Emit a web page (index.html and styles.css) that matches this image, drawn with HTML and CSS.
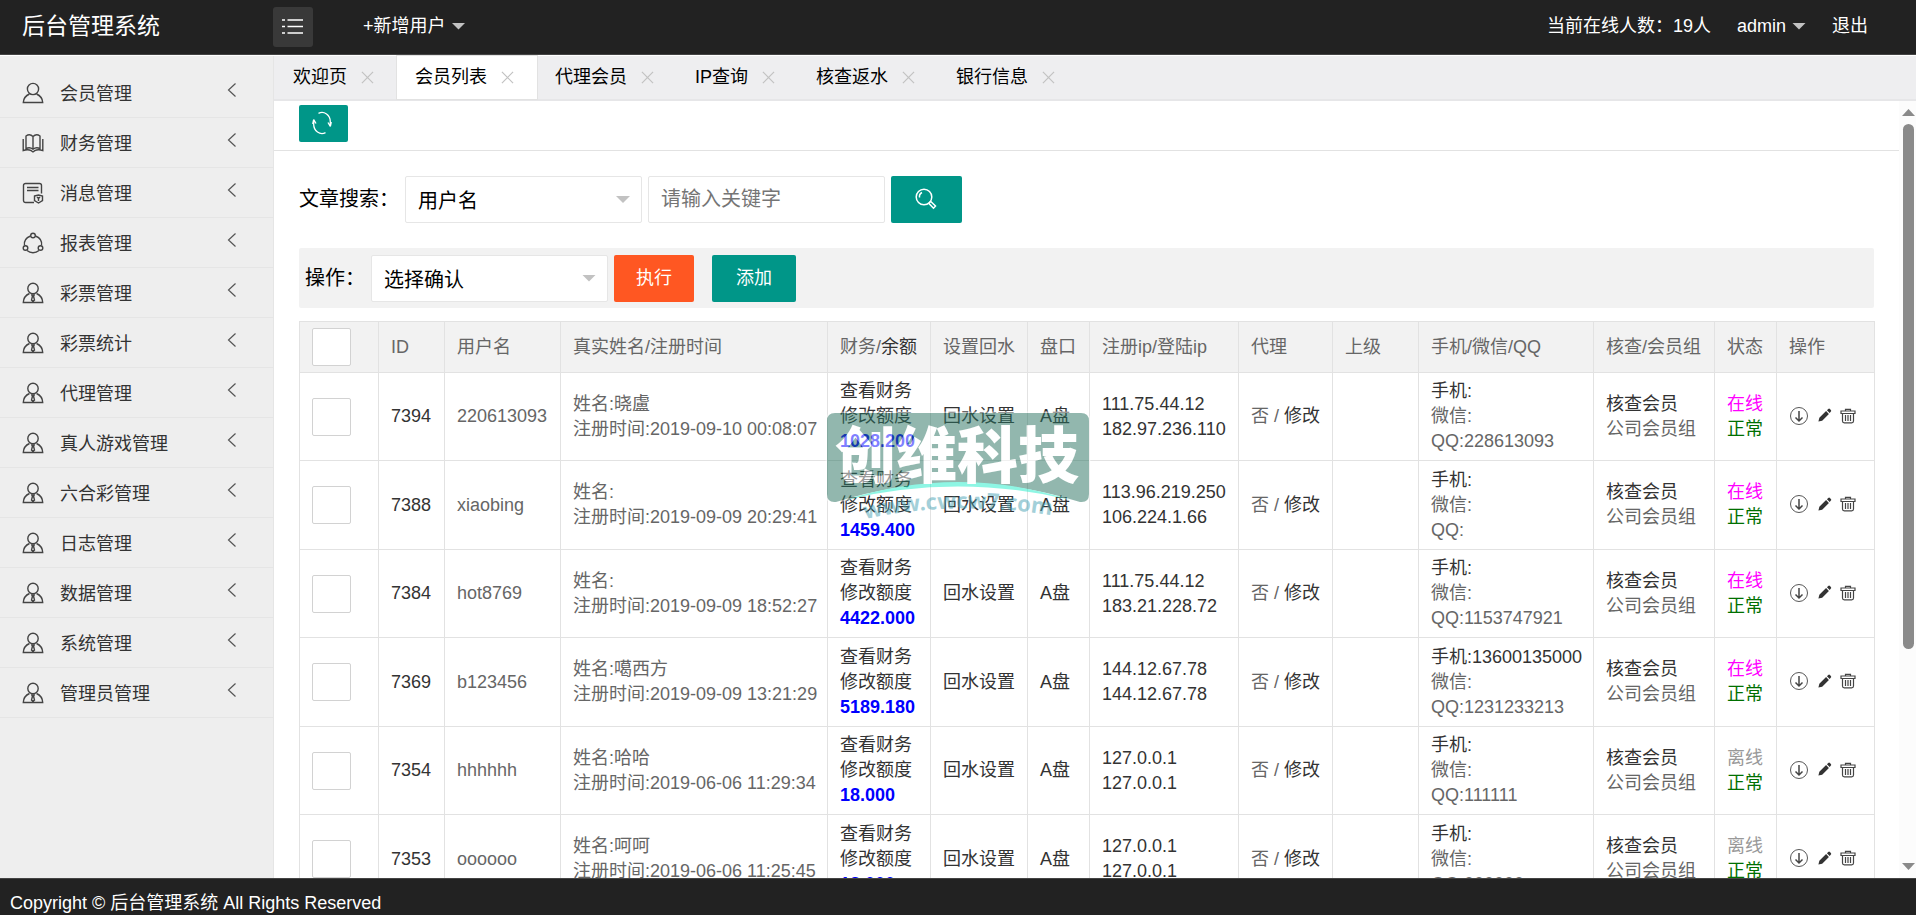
FILE: index.html
```html
<!DOCTYPE html>
<html lang="zh-CN">
<head>
<meta charset="utf-8">
<title>后台管理系统</title>
<link rel="stylesheet" href="styles.css">
</head>
<body>
<svg class="sprite" aria-hidden="true">
  <symbol id="i-user" viewBox="0 0 22 22"><circle cx="11" cy="7" r="5.6"/><path d="M7.5 12C4 13.500 1.500 16 1.300 20.500h19.400C20.500 16 18 13.500 14.500 12"/></symbol>
  <symbol id="i-tie" viewBox="0 0 22 22"><circle cx="11" cy="6.500" r="5.200"/><path d="M7.500 11.500C4 13 1.500 16 1.300 20.500h19.400C20.500 16 18 13 14.500 11.500M9.800 13h2.400l-.6 1.500.9 3.500-1.500 1.500L9.500 18l.9-3.500z"/></symbol>
  <symbol id="i-book" viewBox="0 0 22 22"><path d="M11 4.500C9 2.500 6 2.500 4 4v12.500c2-1 5-1 7 .7 2-1.700 5-1.700 7-.7V4c-2-1.500-5-1.500-7 .5zM11 4.500v12.700M1.200 7v11.500c3-1 6-1 8 .2l1.800 1.300 1.800-1.300c2-1.200 5-1.200 8-.2V7"/></symbol>
  <symbol id="i-doc" viewBox="0 0 22 22"><path d="M12 20.500H3.500a2 2 0 0 1-2-2v-15a2 2 0 0 1 2-2h14a2 2 0 0 1 2 2v8M5 5.500h11.500M5 8.500h11.500M12.500 14l4-1 4 1v4.500l-4 2.500-4-2.500zM15 15l1.500 1.500L18 15M16.500 16v3"/></symbol>
  <symbol id="i-ring" viewBox="0 0 22 22"><circle cx="11" cy="3.500" r="2.300"/><circle cx="3.500" cy="16" r="2.300"/><circle cx="18.500" cy="16" r="2.300"/><path d="M8.500 4C3.500 6 1.800 9.500 2.500 13.500M13.500 4c5 2 6.700 5.500 6 9.500M5 18.500c3.500 3 8.500 3 12 0"/></symbol>
  <symbol id="i-left" viewBox="0 0 10 16"><path d="M8.500 1.500 1.500 8l7 6.500"/></symbol>
  <symbol id="i-x" viewBox="0 0 14 14"><path d="M1 1l12 12M13 1 1 13"/></symbol>
  <symbol id="i-down" viewBox="0 0 20 20"><circle cx="10" cy="10" r="8.500" stroke-width=".9"/><path d="M10 5v10M6.500 11.500 10 15l3.500-3.500" stroke-width="1.500"/></symbol>
  <symbol id="i-pen" viewBox="0 0 16 16"><path d="M1.500 14.500l1-4 7.200-7.200 3 3L5.500 13.500zM10.600 2.400 12 1q1-.8 2 .2l.8.800q.8 1 0 1.800L13.500 5.300z" fill="#333" stroke="none"/></symbol>
  <symbol id="i-bin" viewBox="0 0 16 16"><path d="M1 3h14v2.500H1zM5.500 3V1.300h5V3M2.500 5.500V13q0 1.800 1.800 1.800h7.400q1.800 0 1.800-1.800V5.500M5.500 7v6M8 7v6M10.500 7v6"/></symbol>
</svg>

<header class="header">
  <h1 class="logo">后台管理系统</h1>
  <button class="menu-toggle" type="button" aria-label="收起菜单">
    <svg width="22" height="18" viewBox="0 0 22 18"><path d="M0 2h3M5.500 2H21M0 8.500h3M5.500 8.500H21M0 15h3M5.500 15H21" stroke="#fff" stroke-width="1.500"/></svg>
  </button>
  <a class="top-link" href="#">+新增用户<i class="caret"></i></a>
  <nav class="top-right">
    <a class="top-link" href="#">当前在线人数：19人</a>
    <a class="top-link" href="#">admin<i class="caret"></i></a>
    <a class="top-link" href="#">退出</a>
  </nav>
</header>

<div class="body">
  <nav class="sidebar">
    <a class="side-item" href="#"><svg class="ico"><use href="#i-user"/></svg>会员管理<svg class="chev"><use href="#i-left"/></svg></a>
    <a class="side-item" href="#"><svg class="ico"><use href="#i-book"/></svg>财务管理<svg class="chev"><use href="#i-left"/></svg></a>
    <a class="side-item" href="#"><svg class="ico"><use href="#i-doc"/></svg>消息管理<svg class="chev"><use href="#i-left"/></svg></a>
    <a class="side-item" href="#"><svg class="ico"><use href="#i-ring"/></svg>报表管理<svg class="chev"><use href="#i-left"/></svg></a>
    <a class="side-item" href="#"><svg class="ico"><use href="#i-tie"/></svg>彩票管理<svg class="chev"><use href="#i-left"/></svg></a>
    <a class="side-item" href="#"><svg class="ico"><use href="#i-tie"/></svg>彩票统计<svg class="chev"><use href="#i-left"/></svg></a>
    <a class="side-item" href="#"><svg class="ico"><use href="#i-tie"/></svg>代理管理<svg class="chev"><use href="#i-left"/></svg></a>
    <a class="side-item" href="#"><svg class="ico"><use href="#i-tie"/></svg>真人游戏管理<svg class="chev"><use href="#i-left"/></svg></a>
    <a class="side-item" href="#"><svg class="ico"><use href="#i-tie"/></svg>六合彩管理<svg class="chev"><use href="#i-left"/></svg></a>
    <a class="side-item" href="#"><svg class="ico"><use href="#i-tie"/></svg>日志管理<svg class="chev"><use href="#i-left"/></svg></a>
    <a class="side-item" href="#"><svg class="ico"><use href="#i-tie"/></svg>数据管理<svg class="chev"><use href="#i-left"/></svg></a>
    <a class="side-item" href="#"><svg class="ico"><use href="#i-tie"/></svg>系统管理<svg class="chev"><use href="#i-left"/></svg></a>
    <a class="side-item" href="#"><svg class="ico"><use href="#i-tie"/></svg>管理员管理<svg class="chev"><use href="#i-left"/></svg></a>
  </nav>

  <main class="main">
    <div class="tabs">
      <a class="tab" href="#">欢迎页<svg class="close"><use href="#i-x"/></svg></a>
      <a class="tab active" href="#">会员列表<svg class="close"><use href="#i-x"/></svg></a>
      <a class="tab" href="#">代理会员<svg class="close"><use href="#i-x"/></svg></a>
      <a class="tab" href="#">IP查询<svg class="close"><use href="#i-x"/></svg></a>
      <a class="tab" href="#">核查返水<svg class="close"><use href="#i-x"/></svg></a>
      <a class="tab" href="#">银行信息<svg class="close"><use href="#i-x"/></svg></a>
    </div>

    <div class="frame">
      <div class="page">
        <div class="toolbar">
          <button class="btn refresh" type="button" aria-label="刷新">
            <svg width="20" height="24" viewBox="0 0 20 24" fill="none" stroke="#fff" stroke-width="1.300"><path d="M6.500 2.300C12-.5 18.500 4 18.300 11v4M18.300 15.500l-2.300-4M18.300 15.500l1-4.500M13.500 21.700C8 24.500 1.500 20 1.700 13V9M1.700 8.500l2.300 4M1.700 8.500l-1 4.500"/></svg>
          </button>
        </div>
        <div class="content">
          <form class="search">
            <label class="lbl" for="field">文章搜索：</label>
            <span class="sel"><select id="field"><option>用户名</option></select><i class="caret"></i></span>
            <input class="keyword" type="text" placeholder="请输入关键字" aria-label="关键字">
            <button class="btn find" type="button" aria-label="搜索">
              <svg width="22" height="22" viewBox="0 0 22 22" fill="none" stroke="#fff" stroke-width="1.500"><circle cx="9" cy="9" r="7.800"/><path d="M4.500 9.500Q4 6 7 4.500M14.500 14.500l1.300-1 4.700 4.500-2 2.200-4.500-4.700z"/></svg>
            </button>
          </form>
          <div class="ops">
            <label class="lbl" for="op">操作：</label>
            <span class="sel"><select id="op"><option>选择确认</option></select><i class="caret"></i></span>
            <button class="btn run" type="button">执行</button>
            <button class="btn add" type="button">添加</button>
          </div>

          <div class="table-box">
          <table class="grid">
            <colgroup><col class="c1"><col class="c2"><col class="c3"><col class="c4"><col class="c5"><col class="c6"><col class="c7"><col class="c8"><col class="c9"><col class="c10"><col class="c11"><col class="c12"><col class="c13"><col class="c14"></colgroup>
            <thead>
              <tr><th><input type="checkbox" aria-label="全选"></th><th>ID</th><th>用户名</th><th>真实姓名/注册时间</th><th>财务/<a href="#">余额</a></th><th>设置回水</th><th>盘口</th><th>注册ip/登陆ip</th><th>代理</th><th>上级</th><th>手机/微信/QQ</th><th>核查/会员组</th><th>状态</th><th>操作</th></tr>
            </thead>
            <tbody>
              <tr><td><input type="checkbox" aria-label="选择7394"></td><td><a href="#">7394</a></td><td>220613093</td><td>姓名:晓盧<br>注册时间:2019-09-10 00:08:07</td><td><a href="#">查看财务</a><br><a href="#">修改额度</a><br><b>1028.200</b></td><td><a href="#">回水设置</a></td><td><a href="#">A盘</a></td><td><a href="#">111.75.44.12</a><br><a href="#">182.97.236.110</a></td><td>否 / <a href="#">修改</a></td><td></td><td><a href="#">手机:</a><br>微信:<br>QQ:228613093</td><td><a href="#">核查会员</a><br>公司会员组</td><td><span class="on">在线</span><br><span class="ok">正常</span></td><td><span class="acts"><a href="#" aria-label="下载"><svg class="a-down"><use href="#i-down"/></svg></a><a href="#" aria-label="编辑"><svg class="a-pen"><use href="#i-pen"/></svg></a><a href="#" aria-label="删除"><svg class="a-bin"><use href="#i-bin"/></svg></a></span></td></tr>
              <tr><td><input type="checkbox" aria-label="选择7388"></td><td><a href="#">7388</a></td><td>xiaobing</td><td>姓名:<br>注册时间:2019-09-09 20:29:41</td><td><a href="#">查看财务</a><br><a href="#">修改额度</a><br><b>1459.400</b></td><td><a href="#">回水设置</a></td><td><a href="#">A盘</a></td><td><a href="#">113.96.219.250</a><br><a href="#">106.224.1.66</a></td><td>否 / <a href="#">修改</a></td><td></td><td><a href="#">手机:</a><br>微信:<br>QQ:</td><td><a href="#">核查会员</a><br>公司会员组</td><td><span class="on">在线</span><br><span class="ok">正常</span></td><td><span class="acts"><a href="#" aria-label="下载"><svg class="a-down"><use href="#i-down"/></svg></a><a href="#" aria-label="编辑"><svg class="a-pen"><use href="#i-pen"/></svg></a><a href="#" aria-label="删除"><svg class="a-bin"><use href="#i-bin"/></svg></a></span></td></tr>
              <tr><td><input type="checkbox" aria-label="选择7384"></td><td><a href="#">7384</a></td><td>hot8769</td><td>姓名:<br>注册时间:2019-09-09 18:52:27</td><td><a href="#">查看财务</a><br><a href="#">修改额度</a><br><b>4422.000</b></td><td><a href="#">回水设置</a></td><td><a href="#">A盘</a></td><td><a href="#">111.75.44.12</a><br><a href="#">183.21.228.72</a></td><td>否 / <a href="#">修改</a></td><td></td><td><a href="#">手机:</a><br>微信:<br>QQ:1153747921</td><td><a href="#">核查会员</a><br>公司会员组</td><td><span class="on">在线</span><br><span class="ok">正常</span></td><td><span class="acts"><a href="#" aria-label="下载"><svg class="a-down"><use href="#i-down"/></svg></a><a href="#" aria-label="编辑"><svg class="a-pen"><use href="#i-pen"/></svg></a><a href="#" aria-label="删除"><svg class="a-bin"><use href="#i-bin"/></svg></a></span></td></tr>
              <tr><td><input type="checkbox" aria-label="选择7369"></td><td><a href="#">7369</a></td><td>b123456</td><td>姓名:噶西方<br>注册时间:2019-09-09 13:21:29</td><td><a href="#">查看财务</a><br><a href="#">修改额度</a><br><b>5189.180</b></td><td><a href="#">回水设置</a></td><td><a href="#">A盘</a></td><td><a href="#">144.12.67.78</a><br><a href="#">144.12.67.78</a></td><td>否 / <a href="#">修改</a></td><td></td><td><a href="#">手机:13600135000</a><br>微信:<br>QQ:1231233213</td><td><a href="#">核查会员</a><br>公司会员组</td><td><span class="on">在线</span><br><span class="ok">正常</span></td><td><span class="acts"><a href="#" aria-label="下载"><svg class="a-down"><use href="#i-down"/></svg></a><a href="#" aria-label="编辑"><svg class="a-pen"><use href="#i-pen"/></svg></a><a href="#" aria-label="删除"><svg class="a-bin"><use href="#i-bin"/></svg></a></span></td></tr>
              <tr><td><input type="checkbox" aria-label="选择7354"></td><td><a href="#">7354</a></td><td>hhhhhh</td><td>姓名:哈哈<br>注册时间:2019-06-06 11:29:34</td><td><a href="#">查看财务</a><br><a href="#">修改额度</a><br><b>18.000</b></td><td><a href="#">回水设置</a></td><td><a href="#">A盘</a></td><td><a href="#">127.0.0.1</a><br><a href="#">127.0.0.1</a></td><td>否 / <a href="#">修改</a></td><td></td><td><a href="#">手机:</a><br>微信:<br>QQ:111111</td><td><a href="#">核查会员</a><br>公司会员组</td><td><span class="off">离线</span><br><span class="ok">正常</span></td><td><span class="acts"><a href="#" aria-label="下载"><svg class="a-down"><use href="#i-down"/></svg></a><a href="#" aria-label="编辑"><svg class="a-pen"><use href="#i-pen"/></svg></a><a href="#" aria-label="删除"><svg class="a-bin"><use href="#i-bin"/></svg></a></span></td></tr>
              <tr><td><input type="checkbox" aria-label="选择7353"></td><td><a href="#">7353</a></td><td>oooooo</td><td>姓名:呵呵<br>注册时间:2019-06-06 11:25:45</td><td><a href="#">查看财务</a><br><a href="#">修改额度</a><br><b>18.000</b></td><td><a href="#">回水设置</a></td><td><a href="#">A盘</a></td><td><a href="#">127.0.0.1</a><br><a href="#">127.0.0.1</a></td><td>否 / <a href="#">修改</a></td><td></td><td><a href="#">手机:</a><br>微信:<br>QQ:000000</td><td><a href="#">核查会员</a><br>公司会员组</td><td><span class="off">离线</span><br><span class="ok">正常</span></td><td><span class="acts"><a href="#" aria-label="下载"><svg class="a-down"><use href="#i-down"/></svg></a><a href="#" aria-label="编辑"><svg class="a-pen"><use href="#i-pen"/></svg></a><a href="#" aria-label="删除"><svg class="a-bin"><use href="#i-bin"/></svg></a></span></td></tr>
            </tbody>
          </table>
          <svg class="watermark" width="270" height="116" viewBox="0 0 270 116">
            <defs><path id="arc" d="M42 112Q135 92 240 110"/></defs>
            <path d="M12 6H258q8 0 8 8V87q0 9-9 8Q135 57 13 95q-9 1-9-8V14q0-8 8-8z" fill="#27715f" stroke="#fff" stroke-width="3" paint-order="stroke"/>
            <path d="M22 93Q135 57 248 93Q135 66 22 93z" fill="#1fefca"/>
            <text class="wm-name" x="12" y="71">创维科技</text>
            <text class="wm-url"><textPath href="#arc">www.cwcw7.com</textPath></text>
          </svg>
          </div>
        </div>
      </div>
      <div class="scrollbar" aria-hidden="true"><i class="up"></i><i class="thumb"></i><i class="dn"></i></div>
    </div>
  </main>
</div>

<footer class="footer">Copyright © 后台管理系统 All Rights Reserved</footer>
</body>
</html>
```
FILE: styles.css
```css
* { box-sizing: border-box; }
body {
  margin: 0;
  height: 100vh;
  display: flex;
  flex-direction: column;
  overflow: hidden;
  font: 18px/25px "Liberation Sans", "Noto Sans CJK SC", sans-serif;
  color: #000;
  background: #fff;
}
a { color: inherit; text-decoration: none; }
button, input, select { font: inherit; }
svg { flex: none; fill: none; }
.sprite { position: absolute; width: 0; height: 0; }

.caret {
  width: 14px;
  height: 7px;
  background: #c2c2c2;
  clip-path: polygon(0 0, 100% 0, 50% 100%);
}

.header {
  flex: none;
  height: 55px;
  display: flex;
  align-items: center;
  padding: 0 48px 2px 22px;
  background: #222;
  border-bottom: 1px solid #444;
  color: #fff;
}
.logo { width: 251px; margin: 0; font-size: 23px; font-weight: 400; }
.menu-toggle {
  width: 40px;
  height: 40px;
  margin: 2px 50px 0 0;
  padding: 0;
  display: flex;
  align-items: center;
  justify-content: center;
  border: 0;
  border-radius: 3px;
  background: #393939;
}
.top-link { display: flex; align-items: center; gap: 6px; }
.top-right { display: flex; gap: 26px; margin-left: auto; }

.body { flex: 1; min-height: 0; display: flex; border-top: 1px solid #fff; }
.sidebar {
  flex: none;
  width: 274px;
  padding-top: 12px;
  background: #eee;
  border-right: 1px solid #e5e5e5;
  color: #333;
}
.side-item {
  height: 50px;
  display: flex;
  align-items: center;
  padding: 4px 36px 0 22px;
  border-bottom: 1px solid #e5e5e5;
}
.ico { width: 22px; height: 22px; margin: 0 16px 4px 0; stroke: #444; stroke-width: 1.4px; }
.chev { width: 10px; height: 16px; margin: 0 0 10px auto; stroke: #555; stroke-width: 1.2px; }

.main { flex: 1; min-width: 0; display: flex; flex-direction: column; }
.tabs {
  flex: none;
  height: 45px;
  display: flex;
  padding-left: 1px;
  background: #eeeef0;
  border-bottom: 2px solid #e6e6e8;
}
.tab {
  display: flex;
  align-items: center;
  padding: 0 23px 0 18px;
}
.tab.active { background: #fff; box-shadow: 0 0 0 1px #e2e2e2; }
.close { width: 13px; height: 13px; margin-left: 14px; stroke: #c2c2c2; stroke-width: 1.3px; }

.frame { flex: 1; min-height: 0; display: flex; }
.page { flex: 1; min-width: 0; overflow: hidden; }
.toolbar { height: 50px; padding: 4px 25px; border-bottom: 1px solid #e2e2e2; }
.btn {
  display: flex;
  align-items: center;
  justify-content: center;
  padding: 0 22px;
  border: 0;
  border-radius: 2px;
  background: #009688;
  color: #fff;
}
.refresh { width: 49px; height: 37px; padding: 0 4px 2px 0; }
.content { padding: 25px; }
.search, .ops { display: flex; align-items: center; font-size: 20px; }
.search { margin-bottom: 25px; }
.search .lbl { width: 106px; }
.sel { position: relative; width: 237px; height: 47px; }
.sel select {
  width: 100%;
  height: 100%;
  padding: 4px 12px 0;
  appearance: none;
  border: 1px solid #e6e6e6;
  border-radius: 2px;
  background: #fff;
  color: #000;
}
.sel .caret { position: absolute; right: 12px; top: 20px; }
.keyword {
  width: 237px;
  height: 47px;
  margin: 0 6px;
  padding: 0 12px;
  border: 1px solid #e6e6e6;
  border-radius: 2px;
}
.keyword::placeholder { color: #757575; }
.find { width: 71px; height: 47px; padding: 0 2px 2px 0; }
.ops { padding: 7px 6px; height: 60px; background: #f2f2f2; border-radius: 2px; margin-bottom: 13px; }
.ops .lbl { width: 66px; white-space: nowrap; }
.ops .btn { height: 47px; font-size: 18px; }
.run { width: 80px; margin: 0 18px 0 6px; background: #ff5722; }
.add { width: 84px; }

.table-box { position: relative; }
.grid {
  width: 100%;
  table-layout: fixed;
  border-collapse: collapse;
  color: #666;
}
.c1 { width: 79px; } .c2 { width: 66px; } .c3 { width: 116px; } .c4 { width: 267px; }
.c5 { width: 103px; } .c6 { width: 97px; } .c7 { width: 62px; } .c8 { width: 149px; }
.c9 { width: 94px; } .c10 { width: 86px; } .c11 { width: 175px; } .c12 { width: 121px; }
.c13 { width: 62px; } .c14 { width: 98px; }
.grid th, .grid td {
  height: 88px;
  padding: 0 0 0 12px;
  border: 1px solid #e2e2e2;
  text-align: left;
  font-weight: 400;
  white-space: nowrap;
}
.grid th { height: 51px; background: #f2f2f2; }
.grid tbody tr:nth-child(even) td { height: 89px; }
.grid a { color: #333; }
.grid b { color: #00f; }
.grid input {
  display: block;
  width: 39px;
  height: 38px;
  margin: 0;
  appearance: none;
  border: 1px solid #d2d2d2;
  border-radius: 2px;
  background: #fff;
}
.on { color: #f0f; }
.ok { color: #007000; }
.off { color: #999; }
.acts { display: flex; align-items: center; gap: 8px; padding-bottom: 2px; }
.acts a { display: flex; }
.acts svg { stroke: #444; stroke-width: 1.2px; }
.a-down { width: 20px; height: 20px; }
.a-pen { width: 15px; height: 15px; }
.a-bin { width: 16px; height: 16px; }

.watermark { position: absolute; left: 524px; top: 86px; opacity: .5; pointer-events: none; }
.wm-name { font: 900 61px "Noto Sans CJK SC", sans-serif; fill: #fff; }
.wm-url { font: 700 22px "Noto Sans", sans-serif; fill: #4aa3b5; }

.scrollbar {
  flex: none;
  width: 17px;
  display: flex;
  flex-direction: column;
  align-items: center;
  padding: 8px 0 8px 2px;
  background: #fcfcfc;
}
.scrollbar .up, .scrollbar .dn { width: 13px; height: 7px; background: #8a8a8a; }
.up { clip-path: polygon(50% 0, 100% 100%, 0 100%); }
.dn { clip-path: polygon(0 0, 100% 0, 50% 100%); margin-top: auto; }
.thumb { width: 11px; height: 69%; margin-top: 8px; border-radius: 6px; background: #8a8a8a; }

.footer {
  flex: none;
  height: 37px;
  padding: 12px 10px 0;
  overflow: hidden;
  background: #222;
  border-top: 1px solid #444;
  color: #fff;
}
```
